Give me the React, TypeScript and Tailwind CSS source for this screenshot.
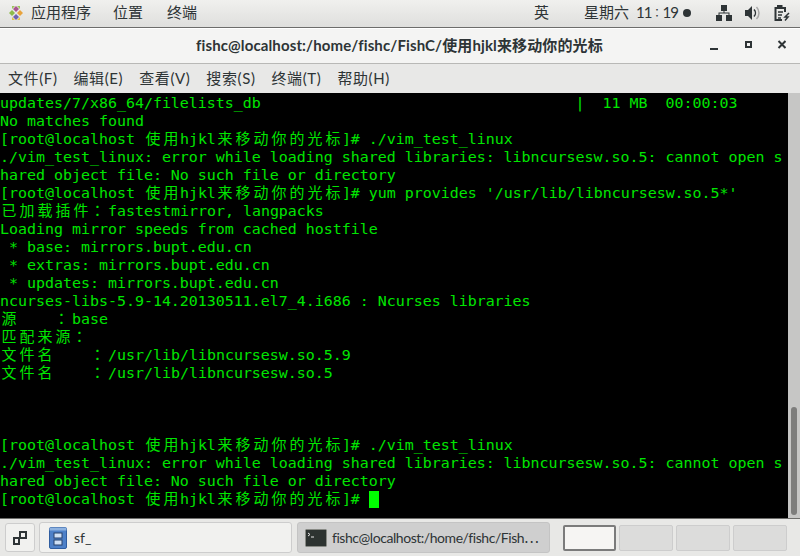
import type { ReactNode } from 'react'

const LINES = [
  'updates/7/x86_64/filelists_db                                   |  11 MB  00:00:03',
  'No matches found',
  '[root@localhost 使用hjkl来移动你的光标]# ./vim_test_linux',
  './vim_test_linux: error while loading shared libraries: libncursesw.so.5: cannot open s',
  'hared object file: No such file or directory',
  "[root@localhost 使用hjkl来移动你的光标]# yum provides '/usr/lib/libncursesw.so.5*'",
  '已加载插件：fastestmirror, langpacks',
  'Loading mirror speeds from cached hostfile',
  ' * base: mirrors.bupt.edu.cn',
  ' * extras: mirrors.bupt.edu.cn',
  ' * updates: mirrors.bupt.edu.cn',
  'ncurses-libs-5.9-14.20130511.el7_4.i686 : Ncurses libraries',
  '源    ：base',
  '匹配来源：',
  '文件名    ：/usr/lib/libncursesw.so.5.9',
  '文件名    ：/usr/lib/libncursesw.so.5',
  '',
  '',
  '',
  '[root@localhost 使用hjkl来移动你的光标]# ./vim_test_linux',
  './vim_test_linux: error while loading shared libraries: libncursesw.so.5: cannot open s',
  'hared object file: No such file or directory',
  '[root@localhost 使用hjkl来移动你的光标]# ',
]

// wide characters sit on a two-cell grid, like a real terminal
function TermLine({ text, cursor }: { text: string; cursor?: boolean }) {
  const parts = text.split(/([^\x00-\x7f])/).filter(Boolean)
  return (
    <div className="h-[18px] whitespace-pre">
      {parts.map((p, i) =>
        p === '：' ? (
          <span key={i} className="inline-block w-[18px] pr-[3px] text-center font-['DejaVu_Sans_Mono','Noto_Sans_CJK_TC',monospace]">{p}</span>
        ) : /[^\x00-\x7f]/.test(p) ? (
          <span key={i} className="inline-block w-[18px] text-center">{p}</span>
        ) : (
          <span key={i}>{p}</span>
        )
      )}
      {cursor && <span className="inline-block w-[10px] h-[17px] align-top mt-[1px] bg-[#00ff00]" />}
    </div>
  )
}

function MenuItem({ children }: { children: ReactNode }) {
  return <span className="text-[15px] tracking-[0.6px] text-[#2e3436]">{children}</span>
}

function TaskButton({ active, icon, label, width }: { active?: boolean; icon: ReactNode; label: string; width: string }) {
  return (
    <div className={`${width} h-[31px] flex items-center rounded-[3px] border text-[14px] text-[#2e3436] ${active ? 'gap-[5px] pl-[7px] tracking-[-0.45px] bg-[#cfcfcf] border-[#c4c4c4]' : 'gap-[7px] pl-[9px] bg-[#f1f1ef] border-[#cdcdcd]'}`}>
      <span className="shrink-0 flex">{icon}</span>
      <span className="whitespace-nowrap">{label}</span>
    </div>
  )
}

export default function App() {
  return (
    <div className="w-[800px] h-[556px] flex flex-col overflow-hidden bg-white font-['Lato','Noto_Sans_CJK_SC',sans-serif]">
      {/* Top panel */}
      <header className="h-[28px] shrink-0 flex items-center pb-[2px] bg-gradient-to-b from-[#f0f0ee] to-[#dfdfdd] border-b border-[#6d6d6b] text-[#2e3436] text-[15px]">
        <svg width="16" height="16" viewBox="0 0 16 16" className="ml-[8px]">
          <path d="M8 1l3 3-3 3-3-3z" fill="#a9568f" />
          <path d="M15 8l-3 3-3-3 3-3z" fill="#e8a33d" />
          <path d="M8 15l-3-3 3-3 3 3z" fill="#6f62b0" />
          <path d="M1 8l3-3 3 3-3 3z" fill="#8dbb4a" />
          <path d="M4 1h3l-3 3zM12 1h-3l3 3z" fill="#9cc45c" />
          <path d="M4 15h3l-3-3zM12 15h-3l3-3z" fill="#e3c24a" />
        </svg>
        <span className="ml-[7px]">应用程序</span>
        <span className="ml-[22px]">位置</span>
        <span className="ml-[24px]">终端</span>
        <span className="ml-[337px]">英</span>
        <span className="ml-[35px]">星期六</span>
        <span className="ml-[7px] tracking-[-1px]">11</span>
        <span className="w-[11px] text-center text-[11px] font-['Noto_Sans_CJK_TC']">：</span>
        <span className="tracking-[-1px]">19</span>
        <span className="ml-[5px] w-[8px] h-[8px] rounded-full bg-[#2e3436]" />
        <svg width="16" height="16" viewBox="0 0 16 16" className="ml-[25px]" fill="#2e3436">
          <rect x="5" y="0" width="6" height="6" />
          <rect x="0" y="10" width="6" height="6" />
          <rect x="10" y="10" width="6" height="6" />
          <path d="M7.500 5h1v2.500H13.500V11h-1V8.500h-9V11h-1V7.500h5z" />
        </svg>
        <svg width="16" height="16" viewBox="0 0 16 16" className="ml-[12px]">
          <path d="M1 5h3l4-4v14l-4-4H1z" fill="#2e3436" />
          <path d="M10 4.500a5 5 0 0 1 0 7" fill="none" stroke="#2e3436" strokeWidth="1.500" />
          <path d="M12.500 2a8.500 8.500 0 0 1 0 12" fill="none" stroke="#a8a8a8" strokeWidth="1.500" />
        </svg>
        <svg width="16" height="16" viewBox="0 0 16 16" className="ml-[14px]" fill="none" stroke="#2e3436" strokeWidth="2">
          <path d="M11 7V3H1.500v12H8" />
          <path d="M4 1h3.500v2H4z" fill="#2e3436" />
          <path d="M4 7h5M4 10h4M4 13h3" strokeWidth="1.500" />
          <path d="M15 8l-4 4h3l-3 3.500" strokeWidth="1.500" />
        </svg>
      </header>

      {/* Title bar */}
      <div className="h-[36px] shrink-0 flex items-center pb-[2px] bg-[#f4f4f3] border-b border-[#b8b8b6] border-t border-t-white text-[#2e3436]">
        <span className="ml-[196px] font-bold text-[15px] tracking-[0.12px] whitespace-nowrap">fishc@localhost:/home/fishc/FishC/使用hjkl来移动你的光标</span>
        <svg width="76" height="10" viewBox="0 0 76 10" className="ml-auto mr-[14px]" fill="none" stroke="#2e3436" strokeWidth="2">
          <path d="M0 9h8" />
          <rect x="36" y="2" width="5" height="5" />
          <path d="M68.500 1l7 7M75.500 1l-7 7" />
        </svg>
      </div>

      {/* Menu bar */}
      <nav className="h-[29px] shrink-0 flex items-center gap-[16px] pl-[8px] bg-[#e8e8e7]">
        <MenuItem>文件(F)</MenuItem>
        <MenuItem>编辑(E)</MenuItem>
        <MenuItem>查看(V)</MenuItem>
        <MenuItem>搜索(S)</MenuItem>
        <MenuItem>终端(T)</MenuItem>
        <MenuItem>帮助(H)</MenuItem>
      </nav>

      {/* Terminal */}
      <main className="h-[425px] shrink-0 flex bg-black">
        <div className="flex-1 pt-[1px] font-['DejaVu_Sans_Mono','Noto_Sans_CJK_SC',monospace] text-[14.95px] leading-[18px] text-[#00e600] overflow-hidden">
          {LINES.map((l, i) => <TermLine key={i} text={l} cursor={i === LINES.length - 1} />)}
        </div>
        <div className="w-[12px] shrink-0 flex items-end justify-center bg-[#c6c6c5] pb-[3px]">
          <div className="w-[6px] h-[108px] rounded-[3px] bg-[#7d7d7c]" />
        </div>
      </main>

      {/* Bottom panel */}
      <footer className="flex-1 flex items-center gap-[4px] pl-[5px] bg-[#e8e8e6] border-t border-[#6d6d6b]">
        <div className="w-[30px] h-[29px] flex items-center justify-center rounded-[3px] border border-[#cdcdcd] bg-[#f1f1ef]">
          <svg width="14" height="14" viewBox="0 0 14 14" fill="none" stroke="#2e3436" strokeWidth="2">
            <path d="M1 13V7h5v6z" />
            <path d="M7 1h6v6H7z" />
          </svg>
        </div>
        <TaskButton
          width="w-[253px]"
          label="sf_"
          icon={
            <svg width="18" height="22" viewBox="0 0 18 22">
              <rect x="0.500" y="0.500" width="17" height="21" rx="1.500" fill="#4d80c8" stroke="#2f5da0" />
              <rect x="0.500" y="0.500" width="17" height="3" fill="#8eb2e0" />
              <rect x="5" y="6" width="8" height="5" fill="#cfe0f5" stroke="#27406a" />
              <rect x="5" y="13" width="8" height="5" fill="#cfe0f5" stroke="#27406a" />
            </svg>
          }
        />
        <TaskButton
          active
          width="w-[253px] ml-[1px]"
          label="fishc@localhost:/home/fishc/Fish⋯"
          icon={
            <svg width="22" height="18" viewBox="0 0 22 18">
              <rect x="0.500" y="0.500" width="21" height="17" rx="1" fill="#2d3331" stroke="#888a85" />
              <path d="M3 4l2 1.500L3 7M6 8h3" fill="none" stroke="#e6e6e6" strokeWidth="1" />
            </svg>
          }
        />
        <div className="ml-[9px] flex gap-[3px]">
          <div className="w-[53px] h-[26px] bg-[#f6f5f3] border-2 border-[#7b7b7b] rounded-[2px]" />
          <div className="w-[54px] h-[26px] bg-[#dcdcdb] border border-[#cdcdcd] rounded-[2px]" />
          <div className="w-[54px] h-[26px] bg-[#dcdcdb] border border-[#cdcdcd] rounded-[2px]" />
          <div className="w-[54px] h-[26px] bg-[#dcdcdb] border border-[#cdcdcd] rounded-[2px]" />
        </div>
      </footer>
    </div>
  )
}
